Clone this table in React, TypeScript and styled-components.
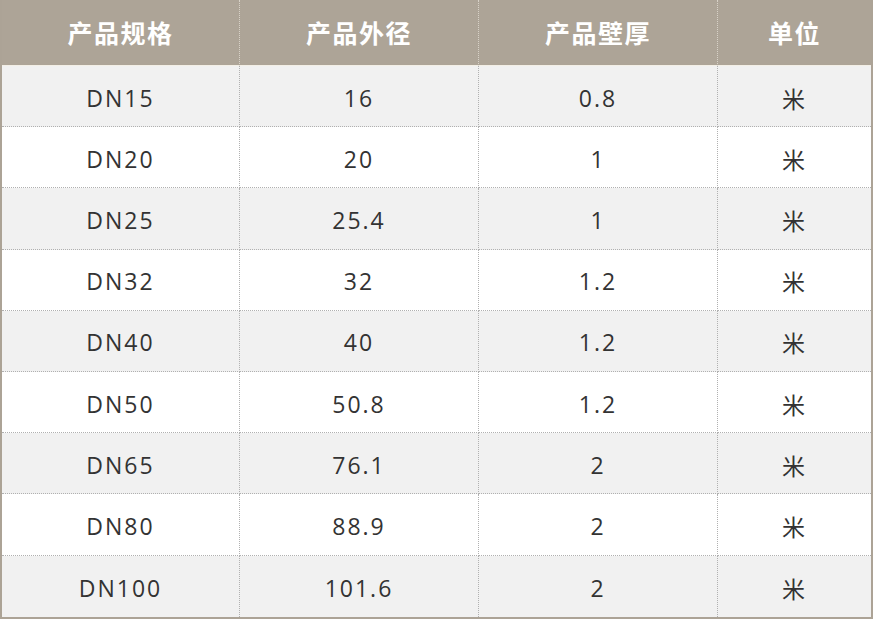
import React from "react";
import styled, { createGlobalStyle } from "styled-components";

const Global = createGlobalStyle`
  html, body { margin: 0; padding: 0; background: #ffffff; }
  body { font-family: "Open Sans", "Noto Sans CJK SC", sans-serif; }
`;

const Frame = styled.div`
  width: 873px;
  box-sizing: border-box;
  border: 2px solid #aca396;
  border-top: none;
  display: grid;
  grid-template-columns: 238px 239px 239px 1fr;
`;

const HeadCell = styled.div<{ $last?: boolean }>`
  height: 66px;
  background: #ada497;
  display: flex;
  align-items: center;
  justify-content: center;
  color: #ffffff;
  font-family: "Noto Sans CJK SC", sans-serif;
  font-weight: 700;
  font-size: 25px;
  letter-spacing: 1.5px;
  box-sizing: border-box;
  border-right: ${(p) => (p.$last ? "none" : "1px dotted #d8d2c8")};
  border-bottom: 1px solid #f3efe6;
  padding-bottom: 2px;
`;

const Cell = styled.div<{ $alt: boolean; $last?: boolean; $bottom?: boolean }>`
  height: 61.2px;
  background: ${(p) => (p.$alt ? "#f1f1f1" : "#ffffff")};
  display: flex;
  align-items: center;
  justify-content: center;
  color: #333333;
  font-family: "Open Sans", "Noto Sans CJK SC", sans-serif;
  font-size: 23px;
  letter-spacing: 2px;
  box-sizing: border-box;
  border-right: ${(p) => (p.$last ? "none" : "1px dotted #b0b0b0")};
  border-bottom: ${(p) => (p.$bottom ? "none" : "1px dotted #b0b0b0")};
  padding-top: ${(p) => (p.$bottom ? "4px" : "3px")};
`;

const rows: [string, string, string][] = [
  ["DN15", "16", "0.8"],
  ["DN20", "20", "1"],
  ["DN25", "25.4", "1"],
  ["DN32", "32", "1.2"],
  ["DN40", "40", "1.2"],
  ["DN50", "50.8", "1.2"],
  ["DN65", "76.1", "2"],
  ["DN80", "88.9", "2"],
  ["DN100", "101.6", "2"],
];

const heads = ["产品规格", "产品外径", "产品壁厚", "单位"];

export default function App() {
  return (
    <>
      <Global />
      <Frame>
        {heads.map((h, i) => (
          <HeadCell key={h} $last={i === 3}>
            {h}
          </HeadCell>
        ))}
        {rows.map((r, ri) => {
          const alt = ri % 2 === 0;
          const bottom = ri === rows.length - 1;
          return (
            <React.Fragment key={r[0]}>
              <Cell $alt={alt} $bottom={bottom}>{r[0]}</Cell>
              <Cell $alt={alt} $bottom={bottom}>{r[1]}</Cell>
              <Cell $alt={alt} $bottom={bottom}>{r[2]}</Cell>
              <Cell $alt={alt} $bottom={bottom} $last>
                米
              </Cell>
            </React.Fragment>
          );
        })}
      </Frame>
    </>
  );
}
